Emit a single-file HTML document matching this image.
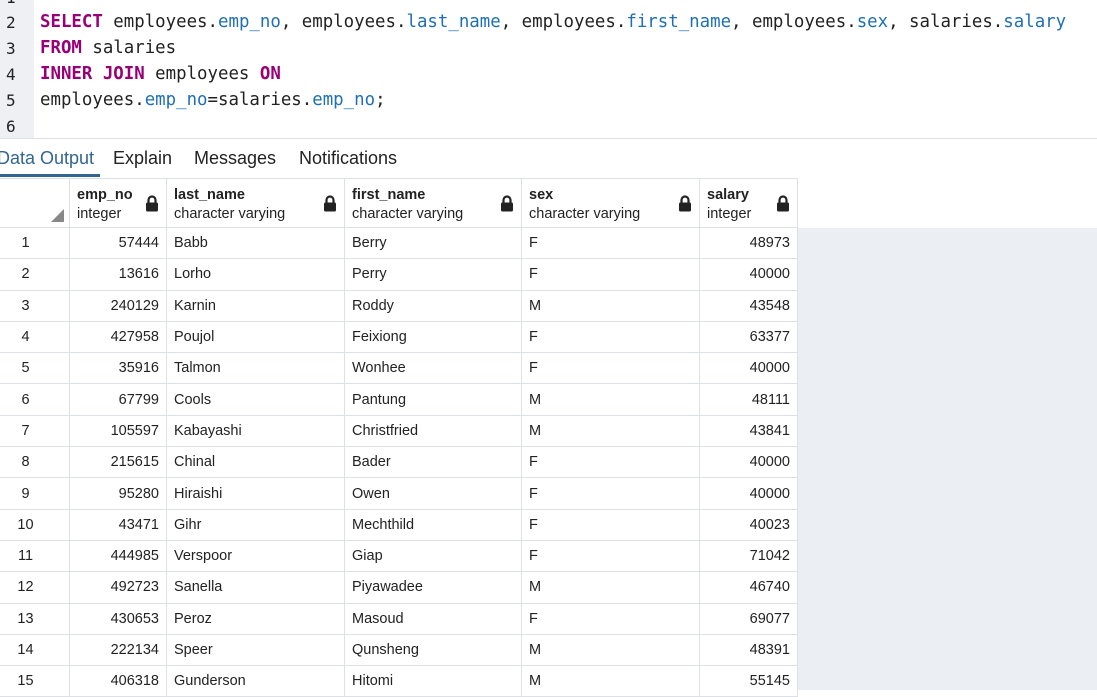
<!DOCTYPE html><html><head><style>
body{margin:0;width:1097px;height:690px;overflow:hidden;background:#fff;font-family:"Liberation Sans",sans-serif;position:relative}
.gut{position:absolute;left:0;top:0;width:34px;height:138px;background:#eef0f4}
.ln{position:absolute;left:6px;font:16px "DejaVu Sans Mono","Liberation Mono",monospace;color:#222}
.code{position:absolute;left:40px;font:17.4px "DejaVu Sans Mono","Liberation Mono",monospace;color:#222;white-space:pre}
.k{color:#990077;font-weight:bold}.b{color:#1f6fb5}
.sep{position:absolute;left:0;top:138px;width:1097px;height:1px;background:#dde0e5}
.tab{position:absolute;top:148px;font-size:18px;color:#222}
.ul{position:absolute;left:0;top:174px;width:100px;height:3px;background:#326690}
.gray{position:absolute;left:797px;top:228px;right:0;bottom:0;background:#ebeef3}
table{position:absolute;left:-1px;top:178px;border-collapse:collapse;table-layout:fixed;width:798px;font-size:14.5px;color:#222}
td,th{border:1px solid #dde0e5;padding:0 7px;height:30.3px;white-space:nowrap;overflow:hidden}
th{height:48px;text-align:left;font-weight:normal;vertical-align:middle;position:relative}
th b{display:block;font-weight:bold;font-size:14.5px;margin-top:2px}
th span{display:block;margin-top:3px}
.lk{position:absolute;right:7px;top:16px;width:14px;height:17px}
td.n{text-align:center;padding-right:25px}td.r{text-align:right}
</style></head><body>
<div class="gut"></div>
<div class="ln" style="top:-12px">1</div>
<div class="ln" style="top:13px">2</div><div class="ln" style="top:39px">3</div><div class="ln" style="top:65px">4</div><div class="ln" style="top:91px">5</div><div class="ln" style="top:117px">6</div>
<div class="code" style="top:12px"><span class="k">SELECT</span> employees.<span class="b">emp_no</span>, employees.<span class="b">last_name</span>, employees.<span class="b">first_name</span>, employees.<span class="b">sex</span>, salaries.<span class="b">salary</span></div>
<div class="code" style="top:38px"><span class="k">FROM</span> salaries</div>
<div class="code" style="top:64px"><span class="k">INNER JOIN</span> employees <span class="k">ON</span></div>
<div class="code" style="top:90px">employees.<span class="b">emp_no</span>=salaries.<span class="b">emp_no</span>;</div>
<div class="sep"></div>
<div class="tab" style="left:-3px;color:#326690">Data Output</div>
<div class="tab" style="left:113px">Explain</div>
<div class="tab" style="left:194px">Messages</div>
<div class="tab" style="left:299px">Notifications</div>
<div class="ul"></div>
<div class="gray"></div>
<table>
<colgroup><col style="width:70px"><col style="width:97px"><col style="width:178px"><col style="width:177px"><col style="width:178px"><col style="width:98px"></colgroup>
<tr><th><svg style="position:absolute;right:5px;bottom:5px" width="13" height="13"><path d="M13 0V13H0Z" fill="#888"/></svg></th>
<th><b>emp_no</b><span>integer</span><svg class="lk" viewBox="0 0 14 17"><path d="M3.5 8V5a3.5 3.5 0 017 0v3" stroke="#222" stroke-width="2.2" fill="none"/><rect x="1" y="7.5" width="12" height="9" rx="1.5" fill="#222"/></svg></th>
<th><b>last_name</b><span>character varying</span><svg class="lk" viewBox="0 0 14 17"><path d="M3.5 8V5a3.5 3.5 0 017 0v3" stroke="#222" stroke-width="2.2" fill="none"/><rect x="1" y="7.5" width="12" height="9" rx="1.5" fill="#222"/></svg></th>
<th><b>first_name</b><span>character varying</span><svg class="lk" viewBox="0 0 14 17"><path d="M3.5 8V5a3.5 3.5 0 017 0v3" stroke="#222" stroke-width="2.2" fill="none"/><rect x="1" y="7.5" width="12" height="9" rx="1.5" fill="#222"/></svg></th>
<th><b>sex</b><span>character varying</span><svg class="lk" viewBox="0 0 14 17"><path d="M3.5 8V5a3.5 3.5 0 017 0v3" stroke="#222" stroke-width="2.2" fill="none"/><rect x="1" y="7.5" width="12" height="9" rx="1.5" fill="#222"/></svg></th>
<th><b>salary</b><span>integer</span><svg class="lk" viewBox="0 0 14 17"><path d="M3.5 8V5a3.5 3.5 0 017 0v3" stroke="#222" stroke-width="2.2" fill="none"/><rect x="1" y="7.5" width="12" height="9" rx="1.5" fill="#222"/></svg></th></tr>
<tr><td class="n">1</td><td class="r">57444</td><td>Babb</td><td>Berry</td><td>F</td><td class="r">48973</td></tr>
<tr><td class="n">2</td><td class="r">13616</td><td>Lorho</td><td>Perry</td><td>F</td><td class="r">40000</td></tr>
<tr><td class="n">3</td><td class="r">240129</td><td>Karnin</td><td>Roddy</td><td>M</td><td class="r">43548</td></tr>
<tr><td class="n">4</td><td class="r">427958</td><td>Poujol</td><td>Feixiong</td><td>F</td><td class="r">63377</td></tr>
<tr><td class="n">5</td><td class="r">35916</td><td>Talmon</td><td>Wonhee</td><td>F</td><td class="r">40000</td></tr>
<tr><td class="n">6</td><td class="r">67799</td><td>Cools</td><td>Pantung</td><td>M</td><td class="r">48111</td></tr>
<tr><td class="n">7</td><td class="r">105597</td><td>Kabayashi</td><td>Christfried</td><td>M</td><td class="r">43841</td></tr>
<tr><td class="n">8</td><td class="r">215615</td><td>Chinal</td><td>Bader</td><td>F</td><td class="r">40000</td></tr>
<tr><td class="n">9</td><td class="r">95280</td><td>Hiraishi</td><td>Owen</td><td>F</td><td class="r">40000</td></tr>
<tr><td class="n">10</td><td class="r">43471</td><td>Gihr</td><td>Mechthild</td><td>F</td><td class="r">40023</td></tr>
<tr><td class="n">11</td><td class="r">444985</td><td>Verspoor</td><td>Giap</td><td>F</td><td class="r">71042</td></tr>
<tr><td class="n">12</td><td class="r">492723</td><td>Sanella</td><td>Piyawadee</td><td>M</td><td class="r">46740</td></tr>
<tr><td class="n">13</td><td class="r">430653</td><td>Peroz</td><td>Masoud</td><td>F</td><td class="r">69077</td></tr>
<tr><td class="n">14</td><td class="r">222134</td><td>Speer</td><td>Qunsheng</td><td>M</td><td class="r">48391</td></tr>
<tr><td class="n">15</td><td class="r">406318</td><td>Gunderson</td><td>Hitomi</td><td>M</td><td class="r">55145</td></tr>
</table>
</body></html>
